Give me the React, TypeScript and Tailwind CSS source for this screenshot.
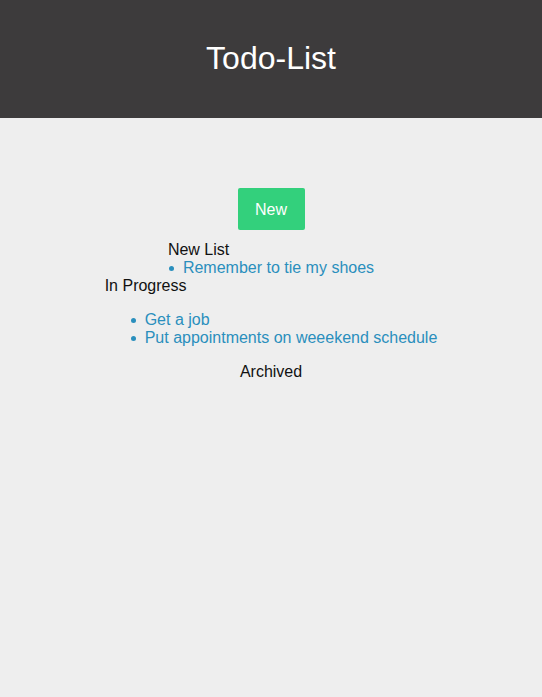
import React from "react";

function Item({ text }: { text: string }) {
  return (
    <li className="flex items-center h-[18px]">
      <span className="block w-[5px] h-[5px] rounded-full bg-[#2a8fbd] mr-[9px] shrink-0" />
      <span className="text-[#2a8fbd] whitespace-nowrap">{text}</span>
    </li>
  );
}

export default function App() {
  return (
    <div
      className="min-h-screen bg-[#eeeeee] text-[16px] leading-[18px] text-[#111]"
      style={{ fontFamily: '"Helvetica Neue", "Liberation Sans", Arial, sans-serif' }}
    >
      <header className="h-[118px] bg-[#3d3b3c] flex items-center justify-center pb-[2px]">
        <h1 className="text-white text-[32px] leading-[40px] font-normal">Todo-List</h1>
      </header>
      <main className="flex flex-col items-center pt-[70px]">
        <button className="w-[67px] h-[42px] bg-[#33d07c] text-white rounded-[2px] text-[16px] pt-[1px]">
          New
        </button>
        <section className="w-fit mt-[11px]">
          <div>New List</div>
          <ul className="pl-[1px]">
            <Item text="Remember to tie my shoes" />
          </ul>
        </section>
        <section className="w-fit">
          <div>In Progress</div>
          <ul className="pl-[26px] my-[16px]">
            <Item text="Get a job" />
            <Item text="Put appointments on weeekend schedule" />
          </ul>
        </section>
        <section className="w-fit">
          <div>Archived</div>
        </section>
      </main>
    </div>
  );
}
